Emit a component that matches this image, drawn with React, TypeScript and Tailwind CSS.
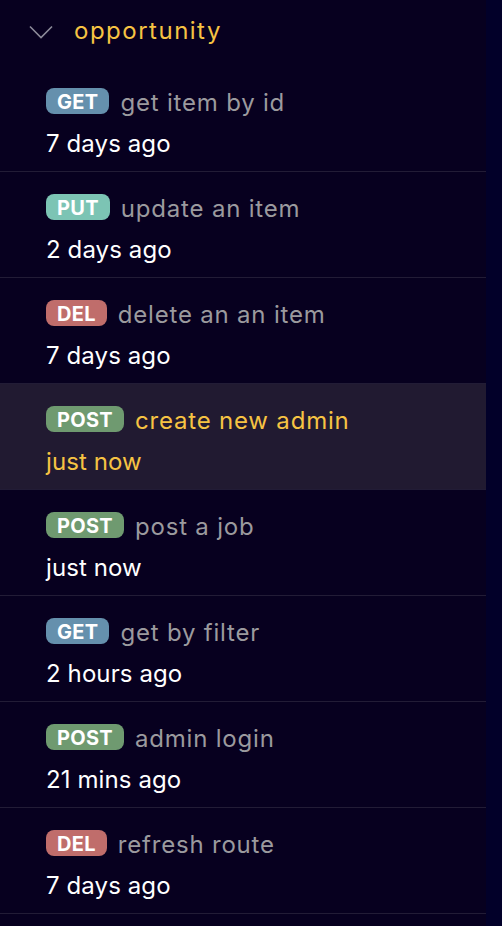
type Method = "GET" | "PUT" | "DEL" | "POST";

const methodColors: Record<Method, string> = {
  GET: "bg-[#6590ad]",
  PUT: "bg-[#7cc4b4]",
  DEL: "bg-[#c06d6b]",
  POST: "bg-[#6f9a70]",
};

const requests: { method: Method; name: string; time: string; active?: boolean }[] = [
  { method: "GET", name: "get item by id", time: "7 days ago" },
  { method: "PUT", name: "update an item", time: "2 days ago" },
  { method: "DEL", name: "delete an an item", time: "7 days ago" },
  { method: "POST", name: "create new admin", time: "just now", active: true },
  { method: "POST", name: "post a job", time: "just now" },
  { method: "GET", name: "get by filter", time: "2 hours ago" },
  { method: "POST", name: "admin login", time: "21 mins ago" },
  { method: "DEL", name: "refresh route", time: "7 days ago" },
];

export default function App() {
  return (
    <div
      className="flex h-[926px] w-[502px] overflow-hidden bg-[#020029]"
      style={{ fontFamily: "Inter, 'Noto Sans', sans-serif" }}
    >
      <div className="w-[486px] shrink-0 bg-[#07001f]">
        <div className="flex h-[66px] items-center pb-[4px] pl-[29px]">
          <svg width="24" height="14" viewBox="0 0 24 14" fill="none" className="mt-[2px]">
            <path d="M1 1.5 L12 12.5 L23 1.5" stroke="#8c8a99" strokeWidth="1.6" />
          </svg>
          <span className="ml-[21px] text-[24px] leading-none tracking-[1.5px] text-[#f6c343]">
            opportunity
          </span>
        </div>
        {requests.map((req, idx) => (
          <div
            key={idx}
            className={`h-[106px] border-b border-[#221c36] pl-[46px] pt-[22px] ${
              req.active ? "bg-[#211a31]" : ""
            }`}
          >
            <div className="flex h-[26px] items-center gap-[11px]">
              <span
                className={`flex h-[26px] items-center rounded-[8px] px-[11px] pt-[1px] text-[20px] font-bold leading-none tracking-[0.3px] text-white ${
                  methodColors[req.method]
                }`}
              >
                {req.method}
              </span>
              <span
                className={`pt-[3px] text-[24px] leading-none tracking-[0.8px] ${
                  req.active ? "text-[#f6c343]" : "text-[#9b9a9e]"
                }`}
              >
                {req.name}
              </span>
            </div>
            <div
              className={`mt-[15px] text-[24px] leading-[30px] tracking-[0.1px] ${
                req.active ? "text-[#f6c343]" : "text-white"
              }`}
            >
              {req.time}
            </div>
          </div>
        ))}
      </div>
    </div>
  );
}
